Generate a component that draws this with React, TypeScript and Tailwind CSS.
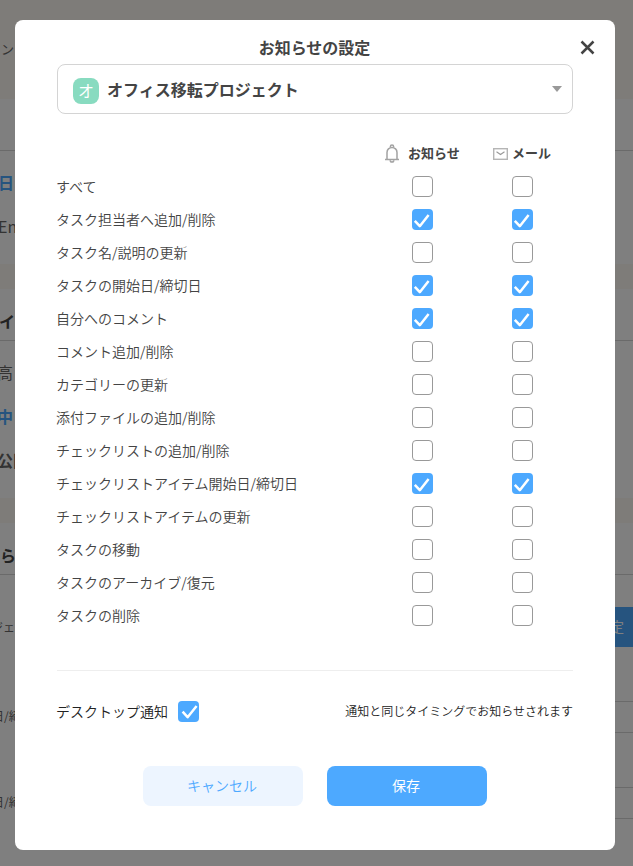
import React, { useState } from 'react';

type Setting = {
  label: string;
  notice: boolean;
  mail: boolean;
};

const initialSettings: Setting[] = [
  { label: 'すべて', notice: false, mail: false },
  { label: 'タスク担当者へ追加/削除', notice: true, mail: true },
  { label: 'タスク名/説明の更新', notice: false, mail: false },
  { label: 'タスクの開始日/締切日', notice: true, mail: true },
  { label: '自分へのコメント', notice: true, mail: true },
  { label: 'コメント追加/削除', notice: false, mail: false },
  { label: 'カテゴリーの更新', notice: false, mail: false },
  { label: '添付ファイルの追加/削除', notice: false, mail: false },
  { label: 'チェックリストの追加/削除', notice: false, mail: false },
  { label: 'チェックリストアイテム開始日/締切日', notice: true, mail: true },
  { label: 'チェックリストアイテムの更新', notice: false, mail: false },
  { label: 'タスクの移動', notice: false, mail: false },
  { label: 'タスクのアーカイブ/復元', notice: false, mail: false },
  { label: 'タスクの削除', notice: false, mail: false },
];

const BellIcon: React.FC = () => (
  <svg width="16" height="20" viewBox="0 0 16 20" fill="none" stroke="#a3a3a3" strokeWidth="1.5">
    <path d="M6.4 3.2V2.6a1.6 1.6 0 0 1 3.2 0v.6" />
    <path d="M3 15.3V8.4a5 5 0 0 1 10 0v6.9" />
    <path d="M1 15.5h14" />
    <path d="M6.2 16.2a1.8 1.8 0 0 0 3.6 0" />
  </svg>
);

const MailIcon: React.FC = () => (
  <svg width="15" height="12" viewBox="0 0 15 12" fill="none" stroke="#b5b5b5" strokeWidth="1.4">
    <rect x="0.7" y="0.7" width="13.6" height="10.6" />
    <path d="M3.5 3.7l4 2.8 4-2.8" stroke="#999" strokeWidth="1.1" />
  </svg>
);

type CheckboxProps = {
  checked: boolean;
  label: string;
  onChange: () => void;
  offset?: boolean;
};

const Checkbox: React.FC<CheckboxProps> = ({ checked, label, onChange, offset }) => (
  <button
    role="checkbox"
    aria-checked={checked}
    aria-label={label}
    onClick={onChange}
    className={`flex h-[21px] w-[21px] shrink-0 items-center justify-center rounded-[4px] ${
      checked ? 'bg-[#4da9ff]' : 'border border-[#999] bg-white'
    }`}
  >
    {checked && (
      <svg
        width="21"
        height="21"
        viewBox="0 0 21 21"
        fill="none"
        stroke="#fff"
        strokeWidth="2.5"
        strokeLinejoin="round"
      >
        <path d={offset ? 'M4.6 10.6l5 5.6L18.6 5' : 'M2.8 11.8l5 5.4L16.6 6'} />
      </svg>
    )}
  </button>
);

// Project page that lies under the dialog
const ProjectPage: React.FC = () => (
  <div className="flex h-full flex-col overflow-hidden bg-white text-sm whitespace-nowrap text-[#666]">
    <div className="h-[99px] shrink-0 bg-[#fcf8f3] pt-[39px]">
      <p className="-ml-3 text-[13px] leading-5">ウン</p>
    </div>
    <section className="h-[165px] shrink-0">
      <div className="h-[52px] border-b border-[#d4d4d4]" />
      <p className="-ml-0.5 pt-[19px] text-base leading-6 font-bold text-[#4da9ff]">日:</p>
      <p className="-ml-0.5 pt-5 text-base leading-6">En</p>
    </section>
    <div className="h-[25px] shrink-0 bg-[#fcf8f3]" />
    <section className="h-[209px] shrink-0">
      <div className="h-[52px] border-b border-[#d4d4d4] pt-5">
        <h2 className="-ml-px text-base leading-6 font-bold text-[#444]">イ</h2>
      </div>
      <p className="-ml-[3px] pt-[19px] text-base leading-6">高</p>
      <p className="-ml-[3px] pt-5 text-base leading-6 font-bold text-[#4da9ff]">中</p>
      <p className="-ml-[3px] pt-5 text-base leading-6 font-bold">公開</p>
    </section>
    <div className="h-[25px] shrink-0 bg-[#fcf8f3]" />
    <section className="flex h-[343px] shrink-0 flex-col">
      <div className="h-[52px] shrink-0 border-b border-[#d4d4d4] pt-5">
        <h2 className="text-base leading-6 font-bold text-[#444]">ら</h2>
      </div>
      <div className="flex flex-1 justify-between">
        <div className="text-xs leading-5">
          <p className="-ml-[9px] pt-[42px]">ジェ</p>
          <p className="-ml-2 pt-[69px]">日/締</p>
          <p className="-ml-2 pt-[66px]">日/締</p>
        </div>
        <div className="w-[100px] pt-8">
          <div className="flex h-10 items-center justify-end bg-[#4da9ff] pr-[9px] pb-0.5 text-white">設定</div>
          <div className="mt-[54px] h-8 border-y border-[#d4d4d4]" />
          <div className="mt-[54px] h-8 border-y border-[#d4d4d4]" />
        </div>
      </div>
    </section>
  </div>
);

const App: React.FC = () => {
  const [settings, setSettings] = useState(initialSettings);
  const [desktop, setDesktop] = useState(true);

  const toggle = (index: number, key: 'notice' | 'mail') => {
    setSettings(settings.map((s, i) => (i === index ? { ...s, [key]: !s[key] } : s)));
  };

  return (
    <div className="relative h-[866px] w-[633px] overflow-hidden font-['Noto_Sans_CJK_JP',sans-serif]">
      <ProjectPage />

      <div className="absolute inset-0 bg-black/50 pt-5 pl-[15px]">
        <div role="dialog" className="flex h-[830px] w-[600px] flex-col rounded-[8px] bg-white px-[42px] text-[#444]">
          {/* Header */}
          <div className="-mr-[22px] grid h-11 shrink-0 grid-cols-[1fr_auto_1fr] items-center pt-2.5">
            <span />
            <h1 className="-ml-[23px] text-base leading-6 font-bold">お知らせの設定</h1>
            <button aria-label="閉じる" className="justify-self-end">
              <svg width="15" height="15" viewBox="0 0 15 15" stroke="#444" strokeWidth="2.5">
                <path d="M1.5 1.5l12 12M13.5 1.5l-12 12" />
              </svg>
            </button>
          </div>

          {/* Project select */}
          <button className="flex h-[50px] shrink-0 items-center rounded-[8px] border border-[#d4d4d4] pr-2.5 pl-[15px]">
            <span className="mt-1 flex h-[26px] w-[26px] items-center justify-center rounded-[8px] bg-[#88dbc0] pb-0.5 text-base leading-6 text-white">
              オ
            </span>
            <span className="ml-2 text-base leading-6 font-bold">オフィス移転プロジェクト</span>
            <svg className="ml-auto" width="10" height="6" viewBox="0 0 10 6" fill="#999">
              <path d="M0 0h10L5 6z" />
            </svg>
          </button>

          {/* Settings */}
          <div className="mt-6 flex h-8 shrink-0 text-[13px] font-bold">
            <div className="ml-auto flex h-8 w-[100px] items-center gap-2 pl-[11px]">
              <BellIcon />
              <span className="pb-0.5">お知らせ</span>
            </div>
            <div className="flex h-8 w-[100px] items-center gap-1 pl-5">
              <MailIcon />
              <span className="pb-0.5">メール</span>
            </div>
          </div>
          {settings.map((item, index) => (
            <div key={item.label} className="flex h-[33px] shrink-0 items-center text-sm font-[350]">
              <span className="-ml-px flex-1 pb-0.5">{item.label}</span>
              <div className="w-[100px] pl-[39px]">
                <Checkbox
                  label={`${item.label} お知らせ`}
                  checked={item.notice}
                  onChange={() => toggle(index, 'notice')}
                />
              </div>
              <div className="w-[100px] pl-[39px]">
                <Checkbox
                  label={`${item.label} メール`}
                  checked={item.mail}
                  onChange={() => toggle(index, 'mail')}
                />
              </div>
            </div>
          ))}

          {/* Desktop notification */}
          <div className="mt-[38px] flex h-[52px] shrink-0 items-center border-t border-[#eee] pt-[30px] font-[350] text-[#222]">
            <span className="mr-2.5 -ml-px pb-0.5 text-sm">デスクトップ通知</span>
            <Checkbox label="デスクトップ通知" checked={desktop} onChange={() => setDesktop(!desktop)} offset />
            <span className="ml-auto pb-px text-xs">通知と同じタイミングでお知らせされます</span>
          </div>

          <div className="mt-11 flex shrink-0 justify-center gap-6 text-sm">
            <button className="h-10 w-40 rounded-[8px] bg-[#edf5ff] pr-0.5 pb-0.5 font-[350] text-[#4da9ff]">
              キャンセル
            </button>
            <button className="h-10 w-40 rounded-[8px] bg-[#4da9ff] pr-0.5 pb-0.5 text-white">保存</button>
          </div>
        </div>
      </div>
    </div>
  );
};

export default App;
